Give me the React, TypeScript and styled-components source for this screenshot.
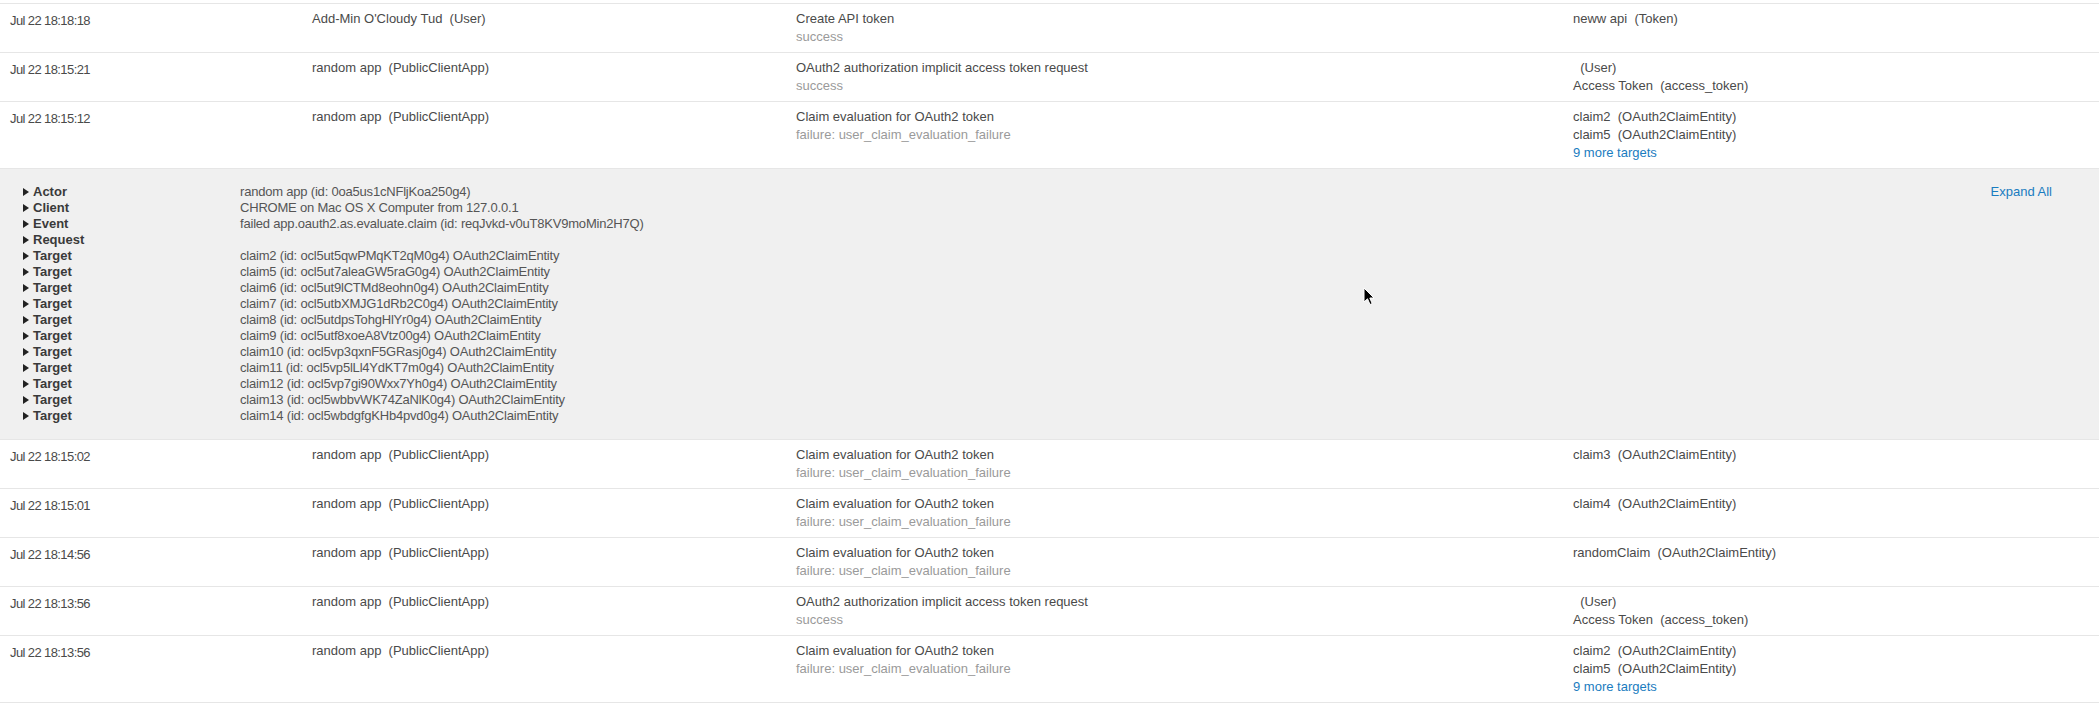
import React from "react";
import styled, { createGlobalStyle } from "styled-components";

const Global = createGlobalStyle`
  html, body { margin: 0; padding: 0; background: #ffffff; }
  body {
    font-family: "Liberation Sans", Arial, sans-serif;
    font-size: 13px;
    color: #4a4a4a;
    overflow: hidden;
  }
`;

const Page = styled.div`
  position: relative;
  width: 2099px;
  height: 704px;
  padding-top: 3px;
  box-sizing: border-box;
  overflow: hidden;
`;

const Row = styled.div`
  display: grid;
  grid-template-columns: 301px 484px 777px 1fr;
  border-top: 1px solid #e6e6e6;
`;

const Cell = styled.div`
  padding: 6px 10px 6px 11px;
  min-height: 36px;
  line-height: 18px;
  color: #4a4a4a;
  white-space: pre;
`;

const DateCell = styled.div`
  padding: 9px 10px 0 10px;
  line-height: 15px;
  letter-spacing: -0.6px;
  color: #4a4a4a;
  white-space: pre;
`;

const Line = styled.div<{ $muted?: boolean }>`
  color: ${(p) => (p.$muted ? "#9a9a9a" : "#4a4a4a")};
  white-space: pre;
  height: 18px;
`;

const MoreLink = styled.a`
  display: block;
  height: 18px;
  color: #1a7cc0;
  text-decoration: none;
  cursor: pointer;
`;

const Detail = styled.div`
  display: flex;
  align-items: flex-start;
  background: #f0f0f0;
  border-top: 1px solid #e6e6e6;
  padding: 15px 47px 15px 23px;
`;

const DetailList = styled.div`
  flex: 1;
  display: grid;
  grid-template-columns: 217px 1fr;
  line-height: 16px;
`;

const DetailLabel = styled.div`
  display: flex;
  align-items: center;
  gap: 4px;
  font-weight: bold;
  color: #3a3a3a;
  height: 16px;
  &::before {
    content: "";
    width: 0;
    height: 0;
    border-left: 6px solid #222;
    border-top: 4px solid transparent;
    border-bottom: 4px solid transparent;
  }
`;

const DetailValue = styled.div`
  color: #555555;
  height: 16px;
  letter-spacing: -0.2px;
  white-space: pre;
`;

const ExpandAll = styled.a`
  color: #1a7cc0;
  text-decoration: none;
  line-height: 16px;
  cursor: pointer;
`;

const Cursor = styled.svg`
  position: absolute;
  left: 1363px;
  top: 287px;
  width: 12px;
  height: 19px;
  pointer-events: none;
`;

type Target = { text: string; link?: boolean };
type Entry = {
  date: string;
  actor: string;
  event: string;
  outcome: string;
  targets: Target[];
};

const claimEval = "Claim evaluation for OAuth2 token";
const claimFail = "failure: user_claim_evaluation_failure";
const implicit = "OAuth2 authorization implicit access token request";
const app = "random app  (PublicClientApp)";

const before: Entry[] = [
  {
    date: "Jul 22 18:18:18",
    actor: "Add-Min O'Cloudy Tud  (User)",
    event: "Create API token",
    outcome: "success",
    targets: [{ text: "neww api  (Token)" }],
  },
  {
    date: "Jul 22 18:15:21",
    actor: app,
    event: implicit,
    outcome: "success",
    targets: [{ text: "  (User)" }, { text: "Access Token  (access_token)" }],
  },
  {
    date: "Jul 22 18:15:12",
    actor: app,
    event: claimEval,
    outcome: claimFail,
    targets: [
      { text: "claim2  (OAuth2ClaimEntity)" },
      { text: "claim5  (OAuth2ClaimEntity)" },
      { text: "9 more targets", link: true },
    ],
  },
];

const after: Entry[] = [
  {
    date: "Jul 22 18:15:02",
    actor: app,
    event: claimEval,
    outcome: claimFail,
    targets: [{ text: "claim3  (OAuth2ClaimEntity)" }],
  },
  {
    date: "Jul 22 18:15:01",
    actor: app,
    event: claimEval,
    outcome: claimFail,
    targets: [{ text: "claim4  (OAuth2ClaimEntity)" }],
  },
  {
    date: "Jul 22 18:14:56",
    actor: app,
    event: claimEval,
    outcome: claimFail,
    targets: [{ text: "randomClaim  (OAuth2ClaimEntity)" }],
  },
  {
    date: "Jul 22 18:13:56",
    actor: app,
    event: implicit,
    outcome: "success",
    targets: [{ text: "  (User)" }, { text: "Access Token  (access_token)" }],
  },
  {
    date: "Jul 22 18:13:56",
    actor: app,
    event: claimEval,
    outcome: claimFail,
    targets: [
      { text: "claim2  (OAuth2ClaimEntity)" },
      { text: "claim5  (OAuth2ClaimEntity)" },
      { text: "9 more targets", link: true },
    ],
  },
];

const details: [string, string][] = [
  ["Actor", "random app (id: 0oa5us1cNFljKoa250g4)"],
  ["Client", "CHROME on Mac OS X Computer from 127.0.0.1"],
  ["Event", "failed app.oauth2.as.evaluate.claim (id: reqJvkd-v0uT8KV9moMin2H7Q)"],
  ["Request", ""],
  ["Target", "claim2 (id: ocl5ut5qwPMqKT2qM0g4) OAuth2ClaimEntity"],
  ["Target", "claim5 (id: ocl5ut7aleaGW5raG0g4) OAuth2ClaimEntity"],
  ["Target", "claim6 (id: ocl5ut9lCTMd8eohn0g4) OAuth2ClaimEntity"],
  ["Target", "claim7 (id: ocl5utbXMJG1dRb2C0g4) OAuth2ClaimEntity"],
  ["Target", "claim8 (id: ocl5utdpsTohgHlYr0g4) OAuth2ClaimEntity"],
  ["Target", "claim9 (id: ocl5utf8xoeA8Vtz00g4) OAuth2ClaimEntity"],
  ["Target", "claim10 (id: ocl5vp3qxnF5GRasj0g4) OAuth2ClaimEntity"],
  ["Target", "claim11 (id: ocl5vp5lLl4YdKT7m0g4) OAuth2ClaimEntity"],
  ["Target", "claim12 (id: ocl5vp7gi90Wxx7Yh0g4) OAuth2ClaimEntity"],
  ["Target", "claim13 (id: ocl5wbbvWK74ZaNlK0g4) OAuth2ClaimEntity"],
  ["Target", "claim14 (id: ocl5wbdgfgKHb4pvd0g4) OAuth2ClaimEntity"],
];

const EventRow: React.FC<{ e: Entry }> = ({ e }) => (
  <Row>
    <DateCell>{e.date}</DateCell>
    <Cell>
      <Line>{e.actor}</Line>
    </Cell>
    <Cell>
      <Line>{e.event}</Line>
      <Line $muted>{e.outcome}</Line>
    </Cell>
    <Cell>
      {e.targets.map((t, i) =>
        t.link ? (
          <MoreLink key={i}>{t.text}</MoreLink>
        ) : (
          <Line key={i}>{t.text}</Line>
        )
      )}
    </Cell>
  </Row>
);

export default function App() {
  return (
    <>
      <Global />
      <Page>
        {before.map((e, i) => (
          <EventRow key={"b" + i} e={e} />
        ))}
        <Detail>
          <DetailList>
            {details.map(([label, value], i) => (
              <React.Fragment key={i}>
                <DetailLabel>{label}</DetailLabel>
                <DetailValue>{value}</DetailValue>
              </React.Fragment>
            ))}
          </DetailList>
          <ExpandAll>Expand All</ExpandAll>
        </Detail>
        {after.map((e, i) => (
          <EventRow key={"a" + i} e={e} />
        ))}
        <Row />
        <Cursor viewBox="0 0 12 19">
          <path
            d="M1 1 L1 15 L4.5 11.8 L7 17.5 L9.2 16.6 L6.8 11 L11 11 Z"
            fill="#000"
            stroke="#fff"
            strokeWidth="1"
            strokeLinejoin="round"
          />
        </Cursor>
      </Page>
    </>
  );
}
